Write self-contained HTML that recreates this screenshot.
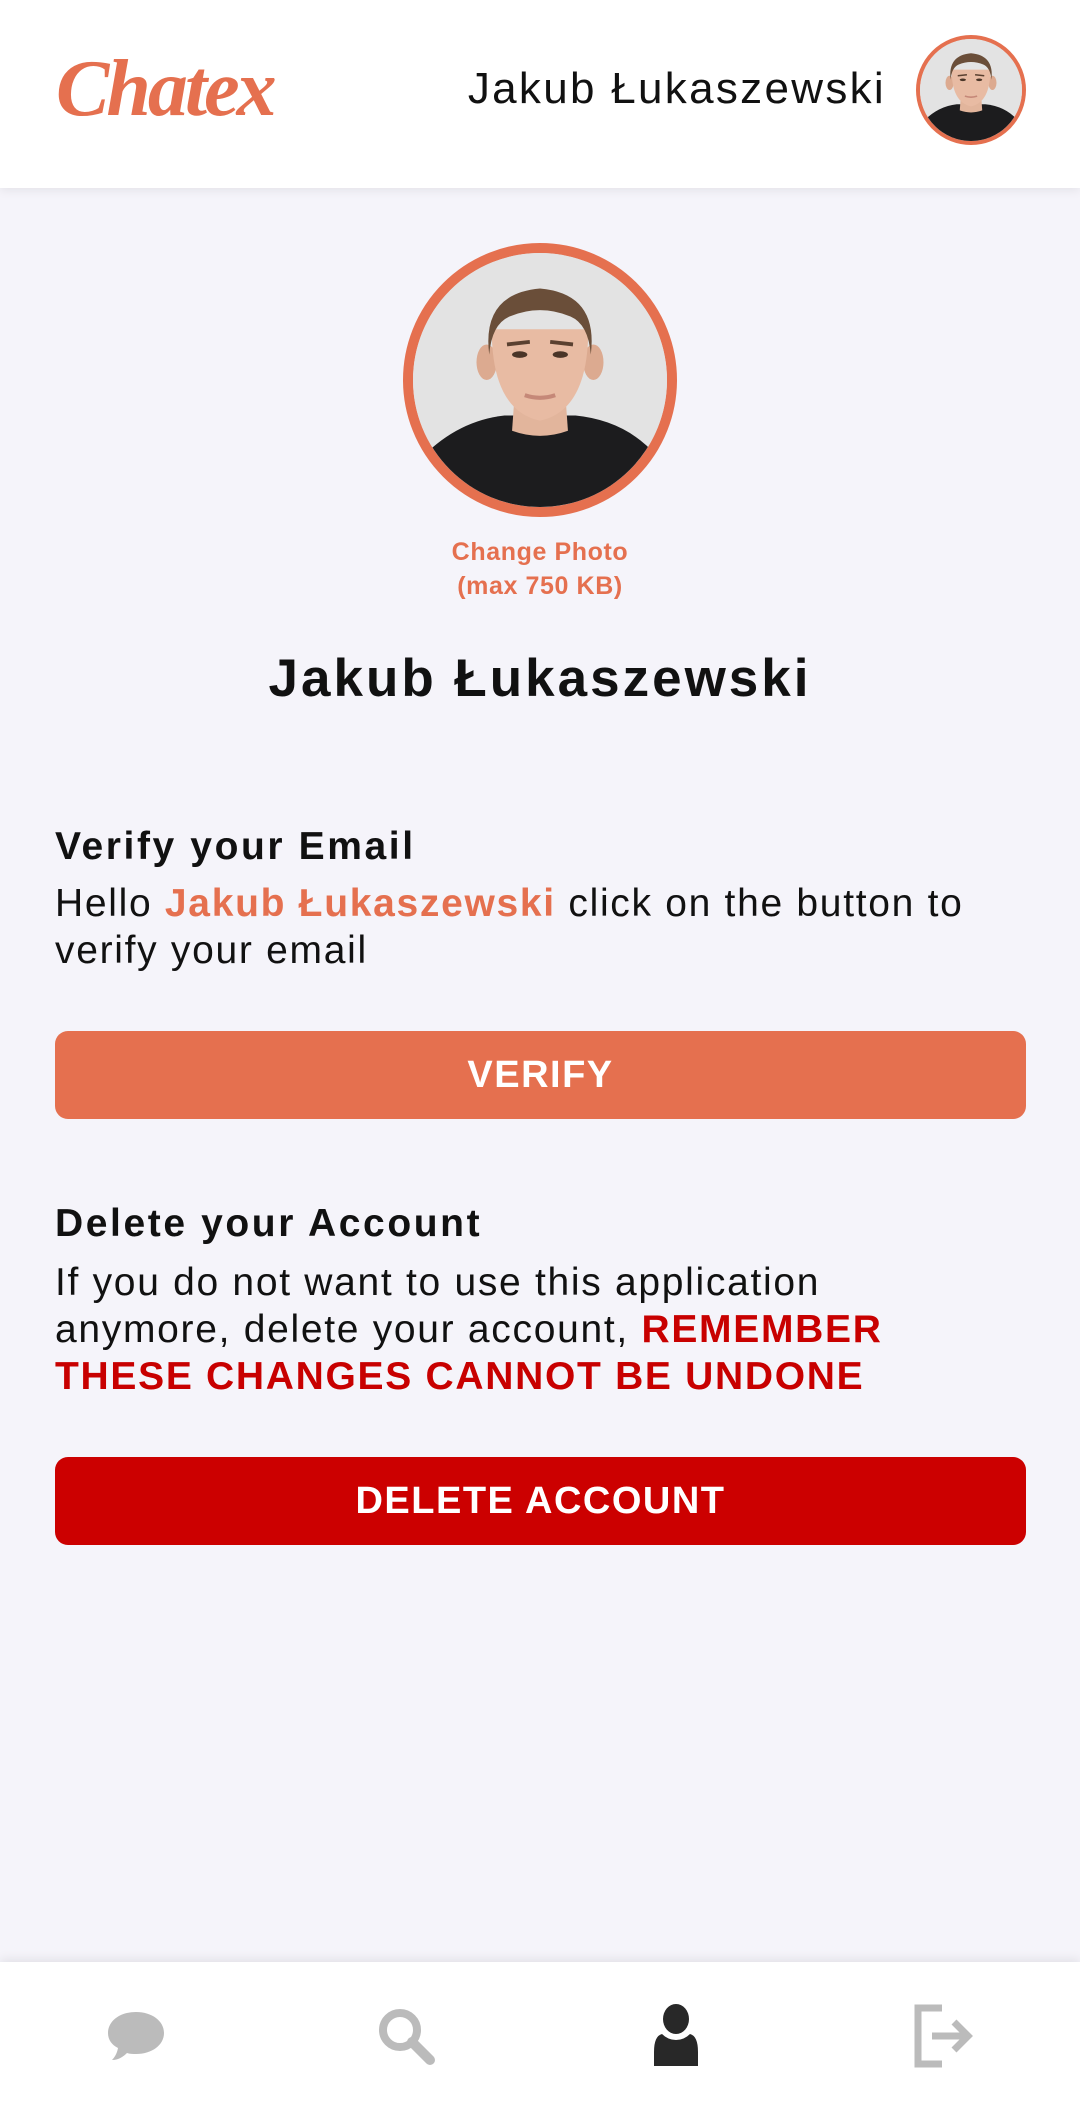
<!DOCTYPE html>
<html><head><meta charset="utf-8">
<style>
*{margin:0;padding:0;box-sizing:border-box}
body{width:1080px;height:2105px;background:#f5f4fa;font-family:"Liberation Sans",sans-serif;position:relative;overflow:hidden;color:#111}
.hdr{position:absolute;left:0;top:0;width:1080px;height:188px;background:#fff;box-shadow:0 2px 10px rgba(0,0,0,.08)}
.logo{position:absolute;left:56px;top:44px;font-family:"Liberation Serif",serif;font-style:italic;font-weight:bold;font-size:80px;color:#e5704f;letter-spacing:-3px}
.hname{position:absolute;right:194px;top:64px;font-size:44px;color:#111;letter-spacing:2.3px}
.ava{position:absolute;border-radius:50%;border:4px solid #e5704f;overflow:hidden;background:#e4e4e4}
.ava svg{width:100%;height:100%;display:block}
.c{position:absolute;left:0;width:1080px;text-align:center}
.cp{color:#e5704f;font-weight:bold;font-size:25px;line-height:34px;letter-spacing:0.6px}
.big{font-size:53px;font-weight:bold;top:648px;letter-spacing:3px}
.h{position:absolute;left:55px;font-size:39px;font-weight:bold;letter-spacing:2.6px}
.p{position:absolute;left:55px;width:1000px;font-size:39px;line-height:47px;letter-spacing:1.7px;white-space:nowrap}
.btn{position:absolute;left:55px;width:971px;height:88px;border-radius:13px;color:#fff;font-size:38px;font-weight:bold;text-align:center;line-height:88px;letter-spacing:1.5px}
.nav{position:absolute;left:0;top:1962px;width:1080px;height:143px;background:#fff;box-shadow:0 -3px 10px rgba(0,0,0,.08)}
.nav svg{position:absolute;top:42px}
</style></head><body>
<svg width="0" height="0" style="position:absolute">
<defs>
<symbol id="ph" viewBox="0 0 100 100">
<rect width="100" height="100" fill="#e3e3e3"/>
<path d="M4 80 Q18 66 36 64 L64 64 Q84 66 96 80 L100 100 L0 100Z" fill="#1c1c1e"/>
<path d="M40 56 L60 56 L61 70 Q50 74 39 70Z" fill="#e2b59c"/>
<ellipse cx="29" cy="43" rx="4" ry="7" fill="#dcaa90"/>
<ellipse cx="71" cy="43" rx="4" ry="7" fill="#dcaa90"/>
<path d="M31 30 Q31 62 50 66 Q69 62 69 30 Z" fill="#e8bba3"/>
<path d="M30 40 Q27 16 50 14 Q73 16 70 40 Q69 28 62 25 Q50 20 38 25 Q31 28 30 40Z" fill="#6a4e39"/>
<path d="M37 36 L46 35 M54 35 L63 36" stroke="#5a4030" stroke-width="1.5"/>
<ellipse cx="42" cy="40" rx="3" ry="1.3" fill="#4a3528"/>
<ellipse cx="58" cy="40" rx="3" ry="1.3" fill="#4a3528"/>
<path d="M44 56 Q50 58 56 56" stroke="#c58878" stroke-width="1.6" fill="none"/>
</symbol>
</defs></svg>

<div class="hdr">
<div class="logo">Chatex</div>
<div class="hname">Jakub Łukaszewski</div>
<div class="ava" style="left:916px;top:35px;width:110px;height:110px"><svg><use href="#ph"/></svg></div>
</div>

<div class="ava" style="left:403px;top:243px;width:274px;height:274px;border-width:10px"><svg><use href="#ph"/></svg></div>
<div class="c cp" style="top:535px">Change Photo<br>(max 750 KB)</div>
<div class="c big">Jakub Łukaszewski</div>

<div class="h" style="top:825px">Verify your Email</div>
<div class="p" style="top:880px">Hello <b style="color:#e5704f">Jakub Łukaszewski</b> click on the button to<br>verify your email</div>
<div class="btn" style="top:1031px;background:#e5704f">VERIFY</div>

<div class="h" style="top:1202px">Delete your Account</div>
<div class="p" style="top:1259px">If you do not want to use this application<br>anymore, delete your account, <b style="color:#c80000">REMEMBER</b><br><b style="color:#c80000">THESE CHANGES CANNOT BE UNDONE</b></div>
<div class="btn" style="top:1457px;background:#cc0000">DELETE ACCOUNT</div>

<div class="nav">
<svg style="left:104px" width="64" height="64" viewBox="0 0 64 64"><path d="M32 8 C16 8 4 17 4 29 C4 36 8 41 14 44 C13 50 10 54 8 56 C15 56 20 52 23 49 C26 50 29 50 32 50 C48 50 60 41 60 29 C60 17 48 8 32 8Z" fill="#bbb"/></svg>
<svg style="left:374px" width="64" height="64" viewBox="0 0 64 64"><circle cx="26" cy="26" r="17" fill="none" stroke="#bbb" stroke-width="8"/><path d="M38 38 L56 56" stroke="#bbb" stroke-width="10" stroke-linecap="round"/></svg>
<svg style="left:646px" width="60" height="64" viewBox="0 0 60 64"><ellipse cx="30" cy="15" rx="13" ry="15" fill="#282828"/><path d="M16 30 Q22 36 30 36 Q38 36 44 30 Q52 32 52 48 L52 62 L8 62 L8 48 Q8 32 16 30Z" fill="#282828"/></svg>
<svg style="left:912px" width="68" height="64" viewBox="0 0 68 64"><path d="M30 4 L6 4 L6 60 L30 60" fill="none" stroke="#bbb" stroke-width="7"/><path d="M20 32 L54 32" stroke="#bbb" stroke-width="7"/><path d="M42 18 L56 32 L42 46" fill="none" stroke="#bbb" stroke-width="7"/></svg>
</div>
</body></html>
